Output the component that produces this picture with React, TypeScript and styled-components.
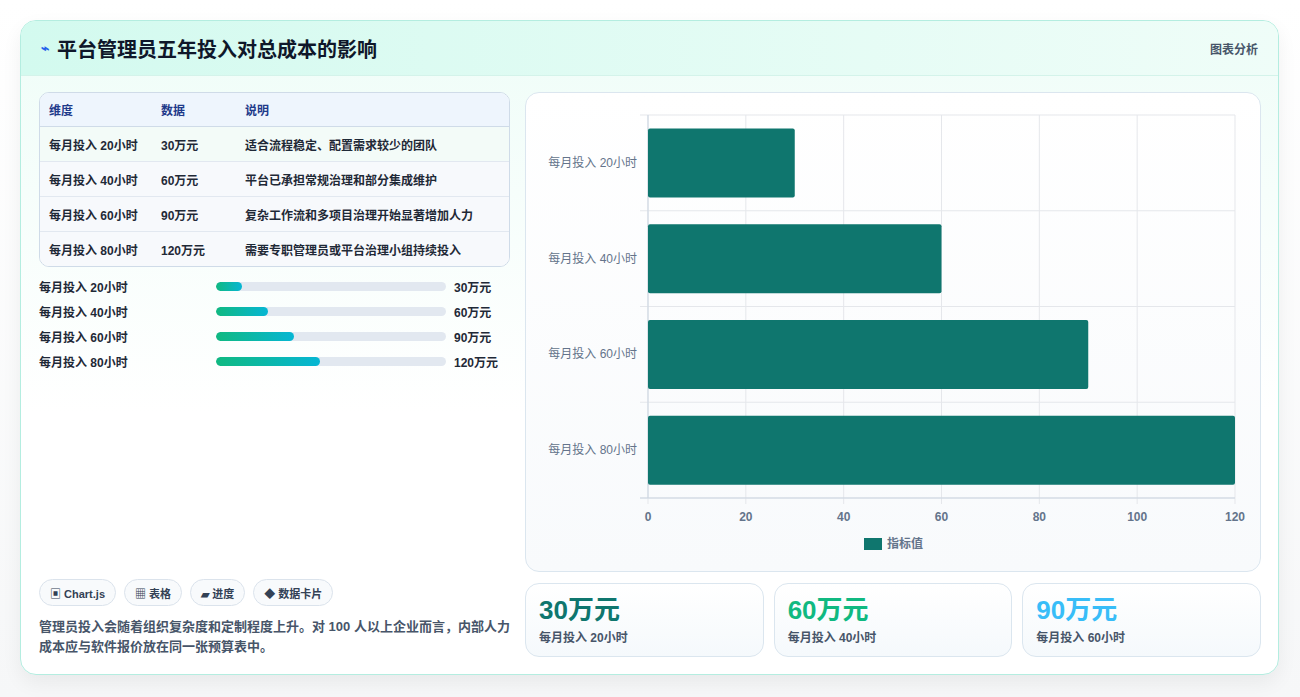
import React from "react"
import styled, { createGlobalStyle } from "styled-components"

const Global = createGlobalStyle`
  html, body { margin: 0; padding: 0; background: #f4f5f7; }
  body { font-family: "Liberation Sans", "Noto Sans CJK SC", sans-serif; }
`

const Page = styled.div`
  width: 1300px;
  height: 697px;
  padding: 20px 20px 0 20px;
  box-sizing: border-box;
  background: linear-gradient(#ffffff, #f6f7f8);
`

const Card = styled.div`
  width: 1259px;
  height: 655px;
  box-sizing: border-box;
  border: 1px solid #b4ede0;
  border-radius: 16px;
  overflow: hidden;
  background: linear-gradient(180deg, #effdf8 0%, #ffffff 60%);
  box-shadow: 0 8px 20px rgba(0, 0, 0, 0.06);
  display: flex;
  flex-direction: column;
`

const Header = styled.div`
  height: 55px;
  flex: 0 0 auto;
  box-sizing: border-box;
  border-bottom: 1px solid #d4f3ea;
  background: linear-gradient(90deg, #d3faef, #effdf8);
  display: flex;
  align-items: center;
  padding: 0 20px;
`

const Title = styled.h1`
  margin: 0;
  font-size: 20px;
  font-weight: 700;
  color: #0f172a;
  display: flex;
  align-items: center;
  gap: 8px;
`

const Bolt = styled.span`
  color: #2563eb;
  font-size: 14px;
`

const HeaderTag = styled.span`
  margin-left: auto;
  font-size: 12px;
  font-weight: 700;
  color: #475569;
`

const Body = styled.div`
  flex: 1;
  display: grid;
  grid-template-columns: 471px 736px;
  gap: 15px;
  padding: 16px 18px 18px 18px;
`

const LeftCol = styled.div`
  display: flex;
  flex-direction: column;
`

const Table = styled.table`
  width: 100%;
  border-collapse: separate;
  border-spacing: 0;
  border: 1px solid #cfdbe8;
  border-radius: 10px;
  overflow: hidden;
  font-size: 12px;
  background: #fff;
`

const Th = styled.th`
  text-align: left;
  font-weight: 700;
  color: #1e3a8a;
  background: #eef5fd;
  height: 33px;
  padding: 0 9px;
  border-bottom: 1px solid #cfdbe8;
`

const Td = styled.td<{ $alt: boolean; $last: boolean }>`
  height: 34px;
  padding: 0 9px;
  color: #1f2937;
  font-weight: 700;
  background: ${p => (p.$alt ? "#f7f9fc" : "#f3fbf8")};
  border-bottom: ${p => (p.$last ? "none" : "1px solid #e2e8f0")};
`

const Bars = styled.div`
  margin-top: 10px;
  display: flex;
  flex-direction: column;
  gap: 7px;
`

const BarRow = styled.div`
  display: grid;
  grid-template-columns: 169px 230px auto;
  gap: 8px;
  align-items: center;
  font-size: 12px;
  font-weight: 700;
  color: #1f2937;
  height: 18px;
`

const Track = styled.div`
  height: 9px;
  border-radius: 5px;
  background: #e2e8f0;
  overflow: hidden;
`

const Fill = styled.div`
  height: 100%;
  border-radius: 5px;
  background: linear-gradient(90deg, #10b981, #06b6d4);
`

const Tags = styled.div`
  margin-top: auto;
  display: flex;
  gap: 8px;
`

const Tag = styled.span`
  height: 27px;
  box-sizing: border-box;
  padding: 0 10px;
  border: 1px solid #dbe3ec;
  border-radius: 14px;
  background: #f8fafc;
  font-size: 11px;
  font-weight: 700;
  color: #334155;
  display: flex;
  align-items: center;
`

const Note = styled.p`
  margin: 11px 0 0 0;
  font-size: 13px;
  line-height: 20px;
  font-weight: 700;
  color: #475569;
`

const RightCol = styled.div`
  display: flex;
  flex-direction: column;
  gap: 11px;
`

const ChartCard = styled.div`
  height: 480px;
  box-sizing: border-box;
  border: 1px solid #dbe6ef;
  border-radius: 14px;
  background: linear-gradient(#ffffff, #f8fafc);
`

const Stats = styled.div`
  display: grid;
  grid-template-columns: repeat(3, 1fr);
  gap: 10px;
`

const Stat = styled.div`
  height: 74px;
  box-sizing: border-box;
  border: 1px solid #dbe6ef;
  border-radius: 14px;
  background: linear-gradient(#ffffff, #f5f9fc);
  padding: 10px 13px;
`

const StatValue = styled.div<{ $color: string }>`
  font-size: 26px;
  font-weight: 700;
  color: ${p => p.$color};
  line-height: 32px;
`

const StatLabel = styled.div`
  font-size: 12px;
  font-weight: 700;
  color: #475569;
  margin-top: 2px;
`

const rows = [
  { h: 20, v: 30, d: "适合流程稳定、配置需求较少的团队" },
  { h: 40, v: 60, d: "平台已承担常规治理和部分集成维护" },
  { h: 60, v: 90, d: "复杂工作流和多项目治理开始显著增加人力" },
  { h: 80, v: 120, d: "需要专职管理员或平台治理小组持续投入" },
]

const Chart = () => {
  // plot area in chart-card coords
  const x0 = 122, x1 = 709, y0 = 22, y1 = 405
  const band = (y1 - y0) / 4
  const sx = (v: number) => x0 + ((x1 - x0) * v) / 120
  return (
    <svg width="734" height="478" style={{ display: "block" }}>
      {[0, 20, 40, 60, 80, 100, 120].map(t => (
        <g key={t}>
          <line x1={sx(t)} x2={sx(t)} y1={y0} y2={y1 + 6} stroke="#e5e7eb" />
          <text x={sx(t)} y={428} textAnchor="middle" fontSize="12" fontWeight="700" fill="#64748b">{t}</text>
        </g>
      ))}
      {[0, 1, 2, 3, 4].map(i => (
        <line key={i} x1={x0 - 8} x2={x1} y1={y0 + band * i} y2={y0 + band * i} stroke="#e5e7eb" />
      ))}
      <line x1={x0} x2={x0} y1={y0} y2={y1} stroke="#cbd5e1" />
      <line x1={x0 - 8} x2={x1} y1={y1} y2={y1} stroke="#cbd5e1" />
      {rows.map((r, i) => {
        const cy = y0 + band * i + band / 2
        return (
          <g key={r.h}>
            <rect x={x0} y={cy - 34.5} width={sx(r.v) - x0} height={69} rx="2" fill="#0f766e" />
            <text x={x0 - 11} y={cy + 4} textAnchor="end" fontSize="12" fill="#64748b">{`每月投入 ${r.h}小时`}</text>
          </g>
        )
      })}
      <rect x="338" y="445" width="18" height="12" fill="#0f766e" />
      <text x="361" y="455" fontSize="12" fontWeight="700" fill="#64748b">指标值</text>
    </svg>
  )
}

export default function App() {
  return (
    <Page>
      <Global />
      <Card>
        <Header>
          <Title><Bolt>⌁</Bolt>平台管理员五年投入对总成本的影响</Title>
          <HeaderTag>图表分析</HeaderTag>
        </Header>
        <Body>
          <LeftCol>
            <Table>
              <thead>
                <tr><Th style={{ width: 94 }}>维度</Th><Th style={{ width: 66 }}>数据</Th><Th>说明</Th></tr>
              </thead>
              <tbody>
                {rows.map((r, i) => (
                  <tr key={r.h}>
                    <Td $alt={i > 0} $last={i === 3}>{`每月投入 ${r.h}小时`}</Td>
                    <Td $alt={i > 0} $last={i === 3}>{r.v}万元</Td>
                    <Td $alt={i > 0} $last={i === 3}>{r.d}</Td>
                  </tr>
                ))}
              </tbody>
            </Table>
            <Bars>
              {rows.map(r => (
                <BarRow key={r.h}>
                  <span>{`每月投入 ${r.h}小时`}</span>
                  <Track><Fill style={{ width: `${(r.v / 120) * 45.2}%` }} /></Track>
                  <span>{r.v}万元</span>
                </BarRow>
              ))}
            </Bars>
            <Tags>
              <Tag>▣ Chart.js</Tag>
              <Tag>▦ 表格</Tag>
              <Tag>▰ 进度</Tag>
              <Tag>◆ 数据卡片</Tag>
            </Tags>
            <Note>管理员投入会随着组织复杂度和定制程度上升。对 100 人以上企业而言，内部人力成本应与软件报价放在同一张预算表中。</Note>
          </LeftCol>
          <RightCol>
            <ChartCard><Chart /></ChartCard>
            <Stats>
              <Stat><StatValue $color="#0f766e">30万元</StatValue><StatLabel>每月投入 20小时</StatLabel></Stat>
              <Stat><StatValue $color="#10b981">60万元</StatValue><StatLabel>每月投入 40小时</StatLabel></Stat>
              <Stat><StatValue $color="#38bdf8">90万元</StatValue><StatLabel>每月投入 60小时</StatLabel></Stat>
            </Stats>
          </RightCol>
        </Body>
      </Card>
    </Page>
  )
}
